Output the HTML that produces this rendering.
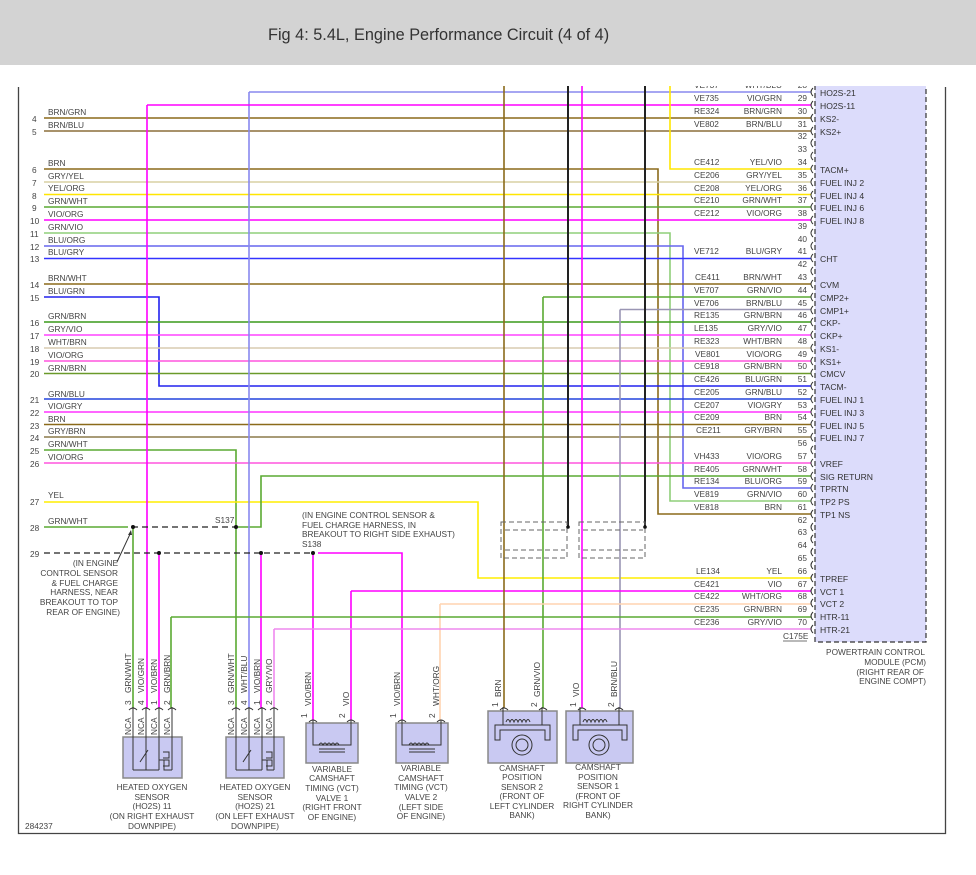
<!DOCTYPE html>
<html><head><meta charset="utf-8"><style>
html,body{margin:0;padding:0;background:#fff;width:976px;height:875px;overflow:hidden}
svg{display:block}
text{font-family:"Liberation Sans",sans-serif;font-size:8.3px;fill:#444}
.t{font-size:16.3px;fill:#333}
.pl{font-size:8.6px;fill:#333}
</style></head><body>
<svg width="976" height="875" viewBox="0 0 976 875" xmlns="http://www.w3.org/2000/svg">

<!-- frame -->
<g stroke="#444" stroke-width="1.3" fill="none">
<path d="M18.5,87 V833.5 H945.5 V87"/>
</g>

<!-- PCM box -->
<rect x="815" y="80" width="111" height="562" fill="#dcdcfb" stroke="#333" stroke-dasharray="5,3" stroke-width="1.2"/>

<g fill="none" stroke-width="1.6">
<path d="M44,118H811" stroke="#8b6a1a"/>
<path d="M44,131H811" stroke="#8b6f3a"/>
<path d="M44,169H658V514H811" stroke="#8b6a1a"/>
<path d="M44,182H811" stroke="#d8d0a4"/>
<path d="M44,194.5H811" stroke="#ffe600"/>
<path d="M44,207H811" stroke="#5aaa32"/>
<path d="M44,220H811" stroke="#ff00ff"/>
<path d="M44,233H670V501H811" stroke="#8fcf7a"/>
<path d="M44,246H683V488H811" stroke="#6666ee"/>
<path d="M44,258.5H811" stroke="#3333ff"/>
<path d="M44,284H811" stroke="#8b6a1a"/>
<path d="M44,297H159V386H811" stroke="#2222ee"/>
<path d="M44,322H811" stroke="#3a9a1a"/>
<path d="M44,335H811" stroke="#ff44ff"/>
<path d="M44,348H811" stroke="#d8ccb0"/>
<path d="M44,361H811" stroke="#ff55dd"/>
<path d="M44,373.5H811" stroke="#6a9a2a"/>
<path d="M44,399H811" stroke="#2244dd"/>
<path d="M44,412H811" stroke="#ff33ff"/>
<path d="M44,424.5H811" stroke="#8b6a1a"/>
<path d="M44,437H811" stroke="#8b7a4a"/>
<path d="M44,450H236V708" stroke="#5aaa32"/>
<path d="M44,463H811" stroke="#ff55dd"/>
<path d="M44,502H478V578H811" stroke="#ffee00"/>
<path d="M44,527H128" stroke="#5aaa32"/>
<path d="M236,527H261V476H811" stroke="#5aaa32"/>
<path d="M133,527V708" stroke="#5aaa32"/>
<path d="M249,92H811" stroke="#8888ee"/>
<path d="M249,92V708" stroke="#8888ee"/>
<path d="M147,105H811M147,105V708" stroke="#ff00ff"/>
<path d="M670,80V169H811" stroke="#ffe600"/>
<path d="M543,297H811M543,297V708" stroke="#5aaa32"/>
<path d="M620,309.5H811M620,309.5V708" stroke="#9a96b4"/>
<path d="M159,553V708M261,553V708M313,553V720" stroke="#ff00ff"/>
<path d="M318,553H402V720" stroke="#ff00ff"/>
<path d="M351,591H811M351,591V720" stroke="#ff00ff"/>
<path d="M440,604H811M440,604V720" stroke="#ffd4b0"/>
<path d="M171,617H811M171,617V708" stroke="#5aaa32"/>
<path d="M274,629H811M274,629V708" stroke="#ee88ee"/>
<path d="M504,80V708" stroke="#8b6a1a"/>
<path d="M582,80V708" stroke="#ff00ff"/>
<path d="M568,80V527M645,80V527" stroke="#222" stroke-width="2"/>
</g>
<g stroke="#222" stroke-width="1.3" fill="none" stroke-dasharray="6,4">
<path d="M132,527H236"/>
<path d="M44,553H313"/>
</g>
<g stroke="#666" stroke-width="1" fill="none" stroke-dasharray="5,3">
<rect x="501" y="522" width="66" height="36"/>
<path d="M505,530H565M505,550H565"/>
<rect x="579" y="522" width="66" height="36"/>
<path d="M583,530H643M583,550H643"/>
</g>
<g fill="#111">
<circle cx="133" cy="527" r="2"/><circle cx="236" cy="527" r="2"/>
<circle cx="159" cy="553" r="2"/><circle cx="261" cy="553" r="2"/><circle cx="313" cy="553" r="2"/>
<circle cx="568" cy="527" r="1.8"/><circle cx="645" cy="527" r="1.8"/>
</g>
<path d="M117,562L131,532" stroke="#333" fill="none"/>
<path d="M131,530l-3,5l4,0z" fill="#333"/>

<g>
<text x="48" y="115">BRN/GRN</text><text x="32" y="122">4</text>
<text x="48" y="128">BRN/BLU</text><text x="32" y="135">5</text>
<text x="48" y="166">BRN</text><text x="32" y="173">6</text>
<text x="48" y="179">GRY/YEL</text><text x="32" y="186">7</text>
<text x="48" y="191">YEL/ORG</text><text x="32" y="199">8</text>
<text x="48" y="204">GRN/WHT</text><text x="32" y="211">9</text>
<text x="48" y="217">VIO/ORG</text><text x="30" y="224">10</text>
<text x="48" y="230">GRN/VIO</text><text x="30" y="237">11</text>
<text x="48" y="243">BLU/ORG</text><text x="30" y="250">12</text>
<text x="48" y="255">BLU/GRY</text><text x="30" y="262">13</text>
<text x="48" y="281">BRN/WHT</text><text x="30" y="288">14</text>
<text x="48" y="294">BLU/GRN</text><text x="30" y="301">15</text>
<text x="48" y="319">GRN/BRN</text><text x="30" y="326">16</text>
<text x="48" y="332">GRY/VIO</text><text x="30" y="339">17</text>
<text x="48" y="345">WHT/BRN</text><text x="30" y="352">18</text>
<text x="48" y="358">VIO/ORG</text><text x="30" y="365">19</text>
<text x="48" y="371">GRN/BRN</text><text x="30" y="377">20</text>
<text x="48" y="397">GRN/BLU</text><text x="30" y="403">21</text>
<text x="48" y="409">VIO/GRY</text><text x="30" y="416">22</text>
<text x="48" y="422">BRN</text><text x="30" y="429">23</text>
<text x="48" y="434">GRY/BRN</text><text x="30" y="441">24</text>
<text x="48" y="447">GRN/WHT</text><text x="30" y="454">25</text>
<text x="48" y="460">VIO/ORG</text><text x="30" y="467">26</text>
<text x="48" y="498">YEL</text><text x="30" y="505">27</text>
<text x="48" y="524">GRN/WHT</text><text x="30" y="531">28</text>
<text x="30" y="557">29</text>
<text x="215" y="523">S137</text>
<text x="302" y="518">(IN ENGINE CONTROL SENSOR &amp;</text>
<text x="302" y="528">FUEL CHARGE HARNESS, IN</text>
<text x="302" y="537">BREAKOUT TO RIGHT SIDE EXHAUST)</text>
<text x="302" y="547">S138</text>
<g text-anchor="end">
<text x="118" y="566">(IN ENGINE</text>
<text x="118" y="576">CONTROL SENSOR</text>
<text x="118" y="586">&amp; FUEL CHARGE</text>
<text x="118" y="595">HARNESS, NEAR</text>
<text x="118" y="605">BREAKOUT TO TOP</text>
<text x="120" y="615">REAR OF ENGINE)</text>
</g>
</g>

<g id="pins">
<g fill="none" stroke="#333" stroke-width="1">
<path d="M813,88q-4,4 0,8M813,101q-4,4 0,8M813,114q-4,4 0,8M813,127q-4,4 0,8M813,139q-4,4 0,8M813,152q-4,4 0,8M813,165q-4,4 0,8M813,178q-4,4 0,8M813,191q-4,4 0,8M813,203q-4,4 0,8M813,216q-4,4 0,8M813,229q-4,4 0,8M813,242q-4,4 0,8M813,254q-4,4 0,8M813,267q-4,4 0,8M813,280q-4,4 0,8M813,293q-4,4 0,8M813,306q-4,4 0,8M813,318q-4,4 0,8M813,331q-4,4 0,8M813,344q-4,4 0,8M813,357q-4,4 0,8M813,369q-4,4 0,8M813,382q-4,4 0,8M813,395q-4,4 0,8M813,408q-4,4 0,8M813,420q-4,4 0,8M813,433q-4,4 0,8M813,446q-4,4 0,8M813,459q-4,4 0,8M813,472q-4,4 0,8M813,484q-4,4 0,8M813,497q-4,4 0,8M813,510q-4,4 0,8M813,523q-4,4 0,8M813,535q-4,4 0,8M813,548q-4,4 0,8M813,561q-4,4 0,8M813,574q-4,4 0,8M813,587q-4,4 0,8M813,599q-4,4 0,8M813,612q-4,4 0,8M813,625q-4,4 0,8"/>
</g>
<g text-anchor="end">
<text x="807" y="88">28</text><text x="807" y="101">29</text><text x="807" y="114">30</text><text x="807" y="127">31</text><text x="807" y="139">32</text><text x="807" y="152">33</text><text x="807" y="165">34</text><text x="807" y="178">35</text><text x="807" y="191">36</text><text x="807" y="203">37</text><text x="807" y="216">38</text><text x="807" y="229">39</text><text x="807" y="242">40</text><text x="807" y="254">41</text><text x="807" y="267">42</text><text x="807" y="280">43</text><text x="807" y="293">44</text><text x="807" y="306">45</text><text x="807" y="318">46</text><text x="807" y="331">47</text><text x="807" y="344">48</text><text x="807" y="357">49</text><text x="807" y="369">50</text><text x="807" y="382">51</text><text x="807" y="395">52</text><text x="807" y="408">53</text><text x="807" y="420">54</text><text x="807" y="433">55</text><text x="807" y="446">56</text><text x="807" y="459">57</text><text x="807" y="472">58</text><text x="807" y="484">59</text><text x="807" y="497">60</text><text x="807" y="510">61</text><text x="807" y="523">62</text><text x="807" y="535">63</text><text x="807" y="548">64</text><text x="807" y="561">65</text><text x="807" y="574">66</text><text x="807" y="587">67</text><text x="807" y="599">68</text><text x="807" y="612">69</text><text x="807" y="625">70</text>
<text x="782" y="88">WHT/BLU</text><text x="782" y="101">VIO/GRN</text><text x="782" y="114">BRN/GRN</text><text x="782" y="127">BRN/BLU</text><text x="782" y="165">YEL/VIO</text><text x="782" y="178">GRY/YEL</text><text x="782" y="191">YEL/ORG</text><text x="782" y="203">GRN/WHT</text><text x="782" y="216">VIO/ORG</text><text x="782" y="254">BLU/GRY</text><text x="782" y="280">BRN/WHT</text><text x="782" y="293">GRN/VIO</text><text x="782" y="306">BRN/BLU</text><text x="782" y="318">GRN/BRN</text><text x="782" y="331">GRY/VIO</text><text x="782" y="344">WHT/BRN</text><text x="782" y="357">VIO/ORG</text><text x="782" y="369">GRN/BRN</text><text x="782" y="382">BLU/GRN</text><text x="782" y="395">GRN/BLU</text><text x="782" y="408">VIO/GRY</text><text x="782" y="420">BRN</text><text x="782" y="433">GRY/BRN</text><text x="782" y="459">VIO/ORG</text><text x="782" y="472">GRN/WHT</text><text x="782" y="484">BLU/ORG</text><text x="782" y="497">GRN/VIO</text><text x="782" y="510">BRN</text><text x="782" y="574">YEL</text><text x="782" y="587">VIO</text><text x="782" y="599">WHT/ORG</text><text x="782" y="612">GRN/BRN</text><text x="782" y="625">GRY/VIO</text>
</g>
<g>
<text x="694" y="88">VE737</text><text x="694" y="101">VE735</text><text x="694" y="114">RE324</text><text x="694" y="127">VE802</text><text x="694" y="165">CE412</text><text x="694" y="178">CE206</text><text x="694" y="191">CE208</text><text x="694" y="203">CE210</text><text x="694" y="216">CE212</text><text x="694" y="254">VE712</text><text x="695" y="280">CE411</text><text x="694" y="293">VE707</text><text x="694" y="306">VE706</text><text x="694" y="318">RE135</text><text x="694" y="331">LE135</text><text x="694" y="344">RE323</text><text x="695" y="357">VE801</text><text x="694" y="369">CE918</text><text x="694" y="382">CE426</text><text x="694" y="395">CE205</text><text x="694" y="408">CE207</text><text x="694" y="420">CE209</text><text x="696" y="433">CE211</text><text x="694" y="459">VH433</text><text x="694" y="472">RE405</text><text x="694" y="484">RE134</text><text x="694" y="497">VE819</text><text x="694" y="510">VE818</text><text x="696" y="574">LE134</text><text x="694" y="587">CE421</text><text x="694" y="599">CE422</text><text x="694" y="612">CE235</text><text x="694" y="625">CE236</text>
</g>
<g>
<text class="pl" x="820" y="96">HO2S-21</text><text class="pl" x="820" y="109">HO2S-11</text><text class="pl" x="820" y="122">KS2-</text><text class="pl" x="820" y="135">KS2+</text><text class="pl" x="820" y="173">TACM+</text><text class="pl" x="820" y="186">FUEL INJ 2</text><text class="pl" x="820" y="199">FUEL INJ 4</text><text class="pl" x="820" y="211">FUEL INJ 6</text><text class="pl" x="820" y="224">FUEL INJ 8</text><text class="pl" x="820" y="262">CHT</text><text class="pl" x="820" y="288">CVM</text><text class="pl" x="820" y="301">CMP2+</text><text class="pl" x="820" y="314">CMP1+</text><text class="pl" x="820" y="326">CKP-</text><text class="pl" x="820" y="339">CKP+</text><text class="pl" x="820" y="352">KS1-</text><text class="pl" x="820" y="365">KS1+</text><text class="pl" x="820" y="377">CMCV</text><text class="pl" x="820" y="390">TACM-</text><text class="pl" x="820" y="403">FUEL INJ 1</text><text class="pl" x="820" y="416">FUEL INJ 3</text><text class="pl" x="820" y="429">FUEL INJ 5</text><text class="pl" x="820" y="441">FUEL INJ 7</text><text class="pl" x="820" y="467">VREF</text><text class="pl" x="820" y="480">SIG RETURN</text><text class="pl" x="820" y="492">TPRTN</text><text class="pl" x="820" y="505">TP2 PS</text><text class="pl" x="820" y="518">TP1 NS</text><text class="pl" x="820" y="582">TPREF</text><text class="pl" x="820" y="595">VCT 1</text><text class="pl" x="820" y="607">VCT 2</text><text class="pl" x="820" y="620">HTR-11</text><text class="pl" x="820" y="633">HTR-21</text>
</g>
<text x="783" y="639">C175E</text>
<path d="M783,641H807" stroke="#444" stroke-width="0.7"/>
<g text-anchor="end">
<text x="925" y="655">POWERTRAIN CONTROL</text>
<text x="926" y="665">MODULE (PCM)</text>
<text x="924" y="675">(RIGHT REAR OF</text>
<text x="926" y="684">ENGINE COMPT)</text>
</g>
</g>

<g fill="#c9c9f2" stroke="#888" stroke-width="1.5">
<rect x="123" y="737" width="59" height="41"/>
<rect x="226" y="737" width="58" height="41"/>
<rect x="306" y="723" width="52" height="40"/>
<rect x="396" y="723" width="52" height="40"/>
<rect x="488" y="711" width="69" height="52"/>
<rect x="566" y="711" width="67" height="52"/>
</g>
<g fill="none" stroke="#333" stroke-width="1">
<path d="M129,710q4,-4 8,0M142,710q4,-4 8,0M155,710q4,-4 8,0M168,710q4,-4 8,0M232,710q4,-4 8,0M245,710q4,-4 8,0M258,710q4,-4 8,0M270,710q4,-4 8,0M309,722q4,-4 8,0M347,722q4,-4 8,0M398,722q4,-4 8,0M437,722q4,-4 8,0M500,710q4,-4 8,0M539,710q4,-4 8,0M578,710q4,-4 8,0M615,710q4,-4 8,0"/>
<path d="M133,707V770M146,707V750M159,707V770M172,707V770M236,707V770M249,707V750M262,707V770M274,707V770"/>
<path d="M133,770H146M146,750V770H159M159,760H164M172,770H164V760"/>
<path d="M140,762l8,-12M163,752h6v6h-6M163,760h6v6h-6"/>
<path d="M236,770H249M249,750V770H262M262,760H267M274,770H267V760"/>
<path d="M243,762l8,-12M266,752h6v6h-6M266,760h6v6h-6"/>
<path d="M313,720V745H351V720M319,745q2,-4 4,0q2,-4 4,0q2,-4 4,0q2,-4 4,0q2,-4 4,0M319,749H345M319,752H345"/>
<path d="M402,720V745H441V720M409,745q2,-4 4,0q2,-4 4,0q2,-4 4,0q2,-4 4,0q2,-4 4,0M409,749H435M409,752H435"/>
<path d="M503,707V725M542,707V725M506,722q2,-5 4,0q2,-5 4,0q2,-5 4,0q2,-5 4,0q2,-5 4,0q2,-5 4,0M495,740V725H550V740H545V730H500V740Z"/>
<circle cx="522" cy="745" r="10"/><circle cx="522" cy="745" r="6"/>
<path d="M580,707V725M619,707V725M583,722q2,-5 4,0q2,-5 4,0q2,-5 4,0q2,-5 4,0q2,-5 4,0q2,-5 4,0M573,740V725H627V740H622V730H578V740Z"/>
<circle cx="599" cy="745" r="10"/><circle cx="599" cy="745" r="6"/>
</g>
<g>
<text transform="translate(131,693) rotate(-90)">GRN/WHT</text>
<text transform="translate(144,693) rotate(-90)">VIO/GRN</text>
<text transform="translate(157,693) rotate(-90)">VIO/BRN</text>
<text transform="translate(170,693) rotate(-90)">GRN/BRN</text>
<text transform="translate(131,705) rotate(-90)">3</text><text transform="translate(144,705) rotate(-90)">4</text><text transform="translate(157,705) rotate(-90)">1</text><text transform="translate(170,705) rotate(-90)">2</text>
<text transform="translate(131,735) rotate(-90)">NCA</text><text transform="translate(144,735) rotate(-90)">NCA</text><text transform="translate(157,735) rotate(-90)">NCA</text><text transform="translate(170,735) rotate(-90)">NCA</text>
<text transform="translate(234,693) rotate(-90)">GRN/WHT</text>
<text transform="translate(247,693) rotate(-90)">WHT/BLU</text>
<text transform="translate(260,693) rotate(-90)">VIO/BRN</text>
<text transform="translate(272,693) rotate(-90)">GRY/VIO</text>
<text transform="translate(234,705) rotate(-90)">3</text><text transform="translate(247,705) rotate(-90)">4</text><text transform="translate(260,705) rotate(-90)">1</text><text transform="translate(272,705) rotate(-90)">2</text>
<text transform="translate(234,735) rotate(-90)">NCA</text><text transform="translate(247,735) rotate(-90)">NCA</text><text transform="translate(260,735) rotate(-90)">NCA</text><text transform="translate(272,735) rotate(-90)">NCA</text>
<text transform="translate(311,706) rotate(-90)">VIO/BRN</text>
<text transform="translate(349,706) rotate(-90)">VIO</text>
<text transform="translate(307,718) rotate(-90)">1</text><text transform="translate(345,718) rotate(-90)">2</text>
<text transform="translate(400,706) rotate(-90)">VIO/BRN</text>
<text transform="translate(439,706) rotate(-90)">WHT/ORG</text>
<text transform="translate(396,718) rotate(-90)">1</text><text transform="translate(435,718) rotate(-90)">2</text>
<text transform="translate(501,697) rotate(-90)">BRN</text>
<text transform="translate(540,697) rotate(-90)">GRN/VIO</text>
<text transform="translate(579,697) rotate(-90)">VIO</text>
<text transform="translate(617,697) rotate(-90)">BRN/BLU</text>
<text transform="translate(498,707) rotate(-90)">1</text><text transform="translate(537,707) rotate(-90)">2</text><text transform="translate(576,707) rotate(-90)">1</text><text transform="translate(614,707) rotate(-90)">2</text>
</g>
<g text-anchor="middle">
<text x="152" y="790">HEATED OXYGEN</text><text x="152" y="800">SENSOR</text><text x="152" y="809">(HO2S) 11</text><text x="152" y="819">(ON RIGHT EXHAUST</text><text x="152" y="829">DOWNPIPE)</text>
<text x="255" y="790">HEATED OXYGEN</text><text x="255" y="800">SENSOR</text><text x="255" y="809">(HO2S) 21</text><text x="255" y="819">(ON LEFT EXHAUST</text><text x="255" y="829">DOWNPIPE)</text>
<text x="332" y="772">VARIABLE</text><text x="332" y="781">CAMSHAFT</text><text x="332" y="791">TIMING (VCT)</text><text x="332" y="801">VALVE 1</text><text x="332" y="810">(RIGHT FRONT</text><text x="332" y="820">OF ENGINE)</text>
<text x="421" y="771">VARIABLE</text><text x="421" y="781">CAMSHAFT</text><text x="421" y="790">TIMING (VCT)</text><text x="421" y="800">VALVE 2</text><text x="421" y="810">(LEFT SIDE</text><text x="421" y="819">OF ENGINE)</text>
<text x="522" y="771">CAMSHAFT</text><text x="522" y="780">POSITION</text><text x="522" y="790">SENSOR 2</text><text x="522" y="799">(FRONT OF</text><text x="522" y="809">LEFT CYLINDER</text><text x="522" y="818">BANK)</text>
<text x="598" y="770">CAMSHAFT</text><text x="598" y="780">POSITION</text><text x="598" y="789">SENSOR 1</text><text x="598" y="799">(FRONT OF</text><text x="598" y="808">RIGHT CYLINDER</text><text x="598" y="818">BANK)</text>
</g>
<text x="25" y="829">284237</text>

<!-- top clip + header -->
<rect x="0" y="0" width="976" height="86" fill="#fff"/>
<rect x="0" y="0" width="976" height="65" fill="#d3d3d3"/>
<text class="t" x="268" y="40">Fig 4: 5.4L, Engine Performance Circuit (4 of 4)</text>
</svg>
</body></html>
